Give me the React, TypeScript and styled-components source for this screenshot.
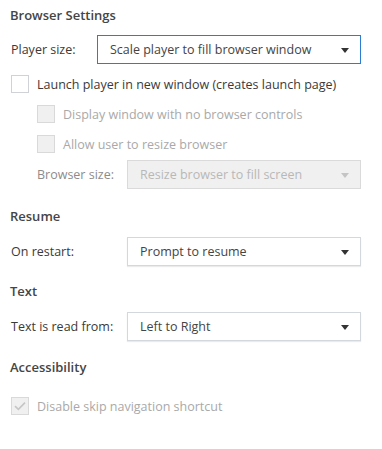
import styled, { createGlobalStyle } from 'styled-components';

const GlobalStyle = createGlobalStyle`
  body {
    margin: 0;
    background: #fff;
    font-family: "Open Sans", "Noto Sans", sans-serif;
  }
`;

const Panel = styled.div`
  width: 382px;
  height: 449px;
  box-sizing: border-box;
  padding: 0 21px 0 10px;
  font-size: 12.5px;
  color: #3a3a3a;
`;

const Heading = styled.div<{ $top?: number }>`
  height: 30px;
  line-height: 30px;
  margin-top: ${(p) => p.$top ?? 0}px;
  font-size: 13px;
  font-weight: 600;
  color: #454545;
`;

const FieldRow = styled.div<{ $top?: number; $indent?: number; $labelWidth: number }>`
  display: grid;
  grid-template-columns: ${(p) => p.$labelWidth}px 1fr;
  align-items: center;
  height: 29px;
  margin-top: ${(p) => p.$top ?? 0}px;
  padding-left: ${(p) => p.$indent ?? 1}px;
`;

const Label = styled.span<{ $disabled?: boolean }>`
  color: ${(p) => (p.$disabled ? '#8c8c8c' : '#3a3a3a')};
`;

const Select = styled.div<{ $focused?: boolean; $disabled?: boolean }>`
  position: relative;
  height: 29px;
  box-sizing: border-box;
  display: flex;
  align-items: center;
  padding: 0 30px 0 12px;
  border: 1px solid ${(p) => (p.$focused ? '#2b7cd3' : p.$disabled ? '#dadada' : '#d3d8de')};
  background: ${(p) => (p.$disabled ? '#f0f0f0' : '#fff')};
  box-shadow: ${(p) => (p.$focused || p.$disabled ? 'none' : '0 1px 1px rgba(0,0,0,0.08)')};
  color: ${(p) => (p.$disabled ? '#b8b8b8' : '#444')};
  white-space: nowrap;
`;

const Arrow = styled.span<{ $disabled?: boolean }>`
  position: absolute;
  right: 11px;
  top: 50%;
  margin-top: -2px;
  width: 0;
  height: 0;
  border-left: 4px solid transparent;
  border-right: 4px solid transparent;
  border-top: 5px solid ${(p) => (p.$disabled ? '#c4c4c4' : '#333')};
`;

const CheckRow = styled.label<{ $indent?: number; $top?: number; $disabled?: boolean }>`
  display: flex;
  align-items: center;
  gap: 8px;
  height: 30px;
  margin-top: ${(p) => p.$top ?? 0}px;
  padding-left: ${(p) => (p.$indent ?? 0) + 1}px;
  color: ${(p) => (p.$disabled ? '#a9a9a9' : '#3a3a3a')};
`;

const Box = styled.span<{ $disabled?: boolean }>`
  width: 18px;
  height: 18px;
  box-sizing: border-box;
  flex: none;
  display: flex;
  align-items: center;
  justify-content: center;
  border: 1px solid ${(p) => (p.$disabled ? '#d9d9d9' : '#cfd3d8')};
  background: ${(p) => (p.$disabled ? '#f0f0f0' : '#fff')};
`;

type SelectProps = { value: string; focused?: boolean; disabled?: boolean };

const Dropdown = ({ value, focused, disabled }: SelectProps) => (
  <Select $focused={focused} $disabled={disabled}>
    {value}
    <Arrow $disabled={disabled} />
  </Select>
);

type CheckProps = { text: string; checked?: boolean; disabled?: boolean; indent?: number; top?: number };

const Check = ({ text, checked, disabled, indent, top }: CheckProps) => (
  <CheckRow $indent={indent} $top={top} $disabled={disabled}>
    <Box $disabled={disabled}>
      {checked && (
        <svg width="12" height="10" viewBox="0 0 12 10">
          <path d="M1 5.2 L4.4 8.4 L11 1.6" fill="none" stroke="#c6c6c6" strokeWidth="1.6" />
        </svg>
      )}
    </Box>
    {text}
  </CheckRow>
);

export default function App() {
  return (
    <>
      <GlobalStyle />
      <Panel>
        <Heading>Browser Settings</Heading>
        <FieldRow $top={5} $labelWidth={86}>
          <Label>Player size:</Label>
          <Dropdown value="Scale player to fill browser window" focused />
        </FieldRow>
        <Check text="Launch player in new window (creates launch page)" top={5} />
        <Check text="Display window with no browser controls" indent={26} disabled />
        <Check text="Allow user to resize browser" indent={26} disabled />
        <FieldRow $top={1} $indent={27} $labelWidth={90}>
          <Label $disabled>Browser size:</Label>
          <Dropdown value="Resize browser to fill screen" disabled />
        </FieldRow>

        <Heading $top={12}>Resume</Heading>
        <FieldRow $top={6} $labelWidth={116}>
          <Label>On restart:</Label>
          <Dropdown value="Prompt to resume" />
        </FieldRow>

        <Heading $top={10}>Text</Heading>
        <FieldRow $top={6} $labelWidth={116}>
          <Label>Text is read from:</Label>
          <Dropdown value="Left to Right" />
        </FieldRow>

        <Heading $top={11}>Accessibility</Heading>
        <Check text="Disable skip navigation shortcut" checked disabled top={9} />
      </Panel>
    </>
  );
}
